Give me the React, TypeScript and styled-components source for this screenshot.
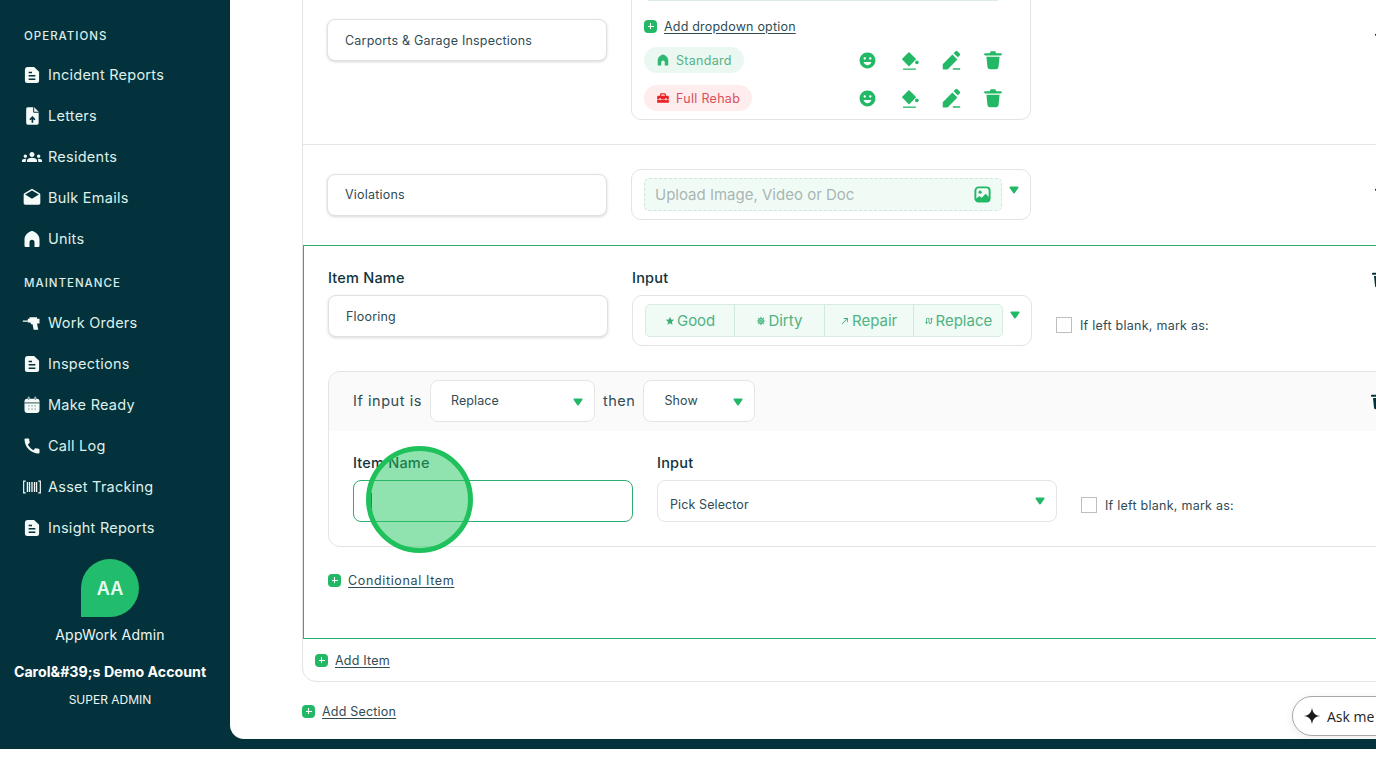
import React from "react";
import styled, { createGlobalStyle } from "styled-components";
import { MdDrafts, MdGroups, MdCall, MdEmojiEmotions, MdHomeRepairService, MdStar, MdCoronavirus, MdNorthEast, MdSwapCalls } from "react-icons/md";

const DARK = "#04323c";
const GREEN = "#22b866";
const FONT = `Inter, "Noto Sans", "Liberation Sans", sans-serif`;

const Global = createGlobalStyle`
  html, body { margin: 0; padding: 0; background: #fff; overflow: hidden; }
  * { box-sizing: border-box; }
  body { font-family: ${FONT}; }
`;

const Shell = styled.div`
  display: flex;
  width: 1376px;
  height: 749px;
  background: ${DARK};
  overflow: hidden;
`;
const Sidebar = styled.aside`
  width: 230px;
  flex: none;
  display: flex;
  flex-direction: column;
  padding-top: 29px;
`;
const GroupLabel = styled.div<{ $top?: number; $bottom: number }>`
  height: 14px;
  line-height: 14px;
  margin: ${(p) => p.$top ?? 0}px 0 ${(p) => p.$bottom}px 24px;
  font-size: 11.5px;
  font-weight: 500;
  letter-spacing: 1px;
  color: #dcecea;
`;
const NavItem = styled.div`
  height: 41px;
  display: flex;
  align-items: center;
  gap: 6px;
  padding-left: 22px;
  font-size: 14.5px;
  letter-spacing: 0.25px;
  color: #dff0ea;
  svg { width: 20px; height: 20px; flex: none; color: #f4fbf8; }
`;
const Profile = styled.div`
  display: flex;
  flex-direction: column;
  align-items: center;
  margin-top: 11px;
  padding-right: 10px;
  color: #eef7f4;
`;
const Avatar = styled.div`
  width: 58px;
  height: 58px;
  border-radius: 50% 50% 50% 0;
  background: #22bd6c;
  display: flex;
  align-items: center;
  justify-content: center;
  font-size: 18px;
  font-weight: 600;
  color: #e8fbf1;
`;
const ProfileName = styled.div`
  margin-top: 9px;
  height: 18px;
  line-height: 18px;
  font-size: 14px;
  letter-spacing: 0.2px;
`;
const AccountName = styled.div`
  margin-top: 19px;
  height: 18px;
  line-height: 18px;
  font-size: 14.2px;
  font-weight: 700;
  color: #fff;
`;
const Role = styled.div`
  margin-top: 11px;
  height: 16px;
  line-height: 16px;
  font-size: 12px;
`;

const Main = styled.main`
  position: relative;
  flex: 1;
  height: 739px;
  overflow: hidden;
  padding-left: 72px;
  background: #fff;
  border-bottom-left-radius: 14px;
  color: #2f4c54;
`;
const Section = styled.section`
  width: 1100px;
  margin-top: -65px;
  border: 1px solid #e2e4e4;
  border-radius: 0 0 14px 14px;
  padding-bottom: 12px;
`;
const Row = styled.div`
  display: flex;
  align-items: center;
  gap: 24px;
  padding: 24px 8px 24px 24px;
  border-bottom: 1px solid #e4e6e6;
`;
const PlainRow = styled(Row)`
  border-bottom-color: transparent;
`;
const NameBox = styled.div`
  width: 280px;
  height: 42px;
  flex: none;
  display: flex;
  align-items: center;
  padding-left: 17px;
  background: #fff;
  border: 1px solid #dfe2e2;
  border-radius: 8px;
  box-shadow: 0 1px 3px rgba(0, 0, 0, 0.16);
  font-size: 12.5px;
  letter-spacing: 0.2px;
`;
const Card = styled.div`
  width: 400px;
  flex: none;
  border: 1px solid #e2e4e4;
  border-radius: 10px;
  padding: 8px 28px 8px 12px;
  position: relative;
`;
const OptionsCard = styled(Card)`
  padding-top: 11px;
`;
const TopField = styled.div`
  height: 29px;
  border: 1px solid #d9ece3;
  border-radius: 6px;
  background: #f1fbf6;
`;
const AddLine = styled.div<{ $top?: number; $left?: number; $spacing?: number }>`
  display: flex;
  align-items: center;
  gap: 7px;
  height: 18px;
  margin-top: ${(p) => p.$top ?? 0}px;
  margin-left: ${(p) => p.$left ?? 0}px;
  font-size: 12.5px;
  letter-spacing: ${(p) => p.$spacing ?? 0.2}px;
  color: #2f4c54;
  span { text-decoration: underline; text-underline-offset: 2px; }
`;
const Plus = styled.i`
  position: relative;
  width: 13px;
  height: 13px;
  flex: none;
  border-radius: 4px;
  background: ${GREEN};
  &::before, &::after {
    content: "";
    position: absolute;
    background: #fff;
    left: 3.5px; top: 6px; width: 6px; height: 1px;
  }
  &::after { left: 6px; top: 3.5px; width: 1px; height: 6px; }
`;
const OptionRow = styled.div<{ $top: number }>`
  display: flex;
  align-items: center;
  justify-content: space-between;
  margin-top: ${(p) => p.$top}px;
`;
const Pill = styled.div<{ $red?: boolean }>`
  height: 26px;
  display: flex;
  align-items: center;
  gap: 6px;
  padding: 0 12px;
  border-radius: 13px;
  font-size: 12.5px;
  letter-spacing: 0.3px;
  background: ${(p) => (p.$red ? "#ffecec" : "#ebf8f1")};
  color: ${(p) => (p.$red ? "#d9505c" : "#52b383")};
  svg { width: 14px; height: 14px; color: ${(p) => (p.$red ? "#ea2127" : "#2eb872")}; }
`;
const Actions = styled.div`
  display: flex;
  gap: 20px;
  margin-right: -2px;
  color: ${GREEN};
  svg { width: 22px; height: 22px; display: block; }
  svg:first-child { width: 19px; height: 19px; margin: 1.5px; }
`;
const UploadField = styled.div`
  height: 33px;
  display: flex;
  align-items: center;
  justify-content: space-between;
  padding: 0 9px 0 10px;
  border: 1px dashed #cfe7da;
  border-radius: 5px;
  background: #f1fbf6;
  font-size: 15px;
  color: #a9b5b3;
  svg { width: 19px; height: 19px; color: ${GREEN}; }
`;
const CaretMark = styled.svg<{ $right: number; $top: number }>`
  position: absolute;
  right: ${(p) => p.$right}px;
  top: ${(p) => p.$top}px;
  width: 10px;
  height: 8px;
`;
const Trash = styled.div`
  width: 20px;
  height: 20px;
  flex: none;
  margin-left: auto;
  color: ${DARK};
  svg { width: 20px; height: 20px; display: block; }
`;
const HeaderTrash = styled(Trash)`
  margin-top: 11px;
`;
const Selected = styled.div`
  height: 394px;
  border: 1px solid #2fae72;
  padding: 23px 10px 0 24px;
`;
const ItemRow = styled.div`
  display: flex;
  align-items: flex-start;
  gap: 24px;
`;
const Column = styled.div`
  display: flex;
  flex-direction: column;
  gap: 8px;
  flex: none;
`;
const Label = styled.div`
  height: 18px;
  line-height: 18px;
  font-size: 14.5px;
  font-weight: 500;
  letter-spacing: 0.2px;
  color: #10343d;
`;
const SegmentGroup = styled.div`
  height: 33px;
  display: flex;
  border: 1px solid #d9ece3;
  border-radius: 5px;
  background: #f1fbf6;
`;
const Segment = styled.div`
  flex: 1;
  display: flex;
  align-items: center;
  justify-content: center;
  gap: 2px;
  font-size: 15px;
  color: #4fb282;
  & + & { border-left: 1px solid #d2e9dd; }
  svg { width: 10px; height: 10px; color: #3cae75; flex: none; }
`;
const Blank = styled.div<{ $top: number }>`
  display: flex;
  align-items: center;
  gap: 8px;
  height: 16px;
  margin-top: ${(p) => p.$top}px;
  font-size: 12.5px;
  letter-spacing: 0.25px;
`;
const Check = styled.div`
  width: 16px;
  height: 16px;
  border: 1px solid #bdbfbf;
`;
const Conditional = styled.div`
  margin-top: 25px;
  border: 1px solid #e2e4e4;
  border-radius: 12px;
  height: 176px;
`;
const CondHeader = styled.div`
  display: flex;
  align-items: flex-start;
  height: 59px;
  padding: 8px 0 0 24px;
  background: #fafafa;
  border-radius: 12px 12px 0 0;
  font-size: 14.5px;
  line-height: 42px;
  letter-spacing: 0.55px;
`;
const Select = styled.div<{ $w: number; $pad: number }>`
  position: relative;
  width: ${(p) => p.$w}px;
  height: 42px;
  flex: none;
  display: flex;
  align-items: center;
  margin: 0 8px;
  padding-left: ${(p) => p.$pad}px;
  background: #fff;
  border: 1px solid #e4e6e6;
  border-radius: 8px;
  font-size: 12.5px;
  letter-spacing: 0.1px;
`;
const FullSelect = styled(Select)`
  margin: 0;
  padding-top: 7px;
`;
const CondBody = styled.div`
  padding: 23px 0 0 24px;
`;
const InputWrap = styled.div`
  position: relative;
  width: 280px;
  height: 42px;
  border: 1px solid #2fae72;
  border-radius: 8px;
`;
const TextCursor = styled.div`
  position: absolute;
  left: 17px;
  top: 12px;
  width: 1px;
  height: 16px;
  background: #1c4a44;
`;
const ClickMark = styled.div`
  position: absolute;
  left: 12px;
  top: -35px;
  width: 107px;
  height: 107px;
  border: 5px solid #1fc15c;
  border-radius: 50%;
  background: rgba(34, 197, 94, 0.5);
`;
const AskButton = styled.div`
  position: absolute;
  left: 1062px;
  top: 696px;
  width: 130px;
  height: 40px;
  display: flex;
  align-items: center;
  gap: 6px;
  padding-left: 10px;
  background: #fff;
  border: 1px solid #a8a8a8;
  border-radius: 20px;
  box-shadow: 0 2px 10px rgba(0, 0, 0, 0.08);
  font-family: "Open Sans", sans-serif;
  font-size: 14px;
  white-space: nowrap;
  color: #222;
  svg { width: 18px; height: 18px; flex: none; }
`;

const Caret = ({ right, top }: { right: number; top: number }) => (
  <CaretMark $right={right} $top={top} viewBox="0 0 10 8">
    <path d="M1.5 1.5h7L5 6.5z" fill="#22b866" stroke="#22b866" strokeWidth="2" strokeLinejoin="round" />
  </CaretMark>
);

const DocIcon = () => (
  <svg viewBox="0 0 24 24">
    <path d="M7 2.5h7.5L20.5 8v10.5a3 3 0 0 1-3 3h-11a3 3 0 0 1-3-3V6a3.5 3.5 0 0 1 3.5-3.5z" fill="currentColor" />
    <path d="M8 9h4M8 13h8M8 17h8" stroke={DARK} strokeWidth="1.8" fill="none" />
  </svg>
);
const LetterIcon = () => (
  <svg viewBox="0 0 24 24">
    <path d="M7 1.5h7.5l5.5 5.5v13.5a2 2 0 0 1-2 2H7a2 2 0 0 1-2-2v-17a2 2 0 0 1 2-2z" fill="currentColor" />
    <path d="M14 1.5V7.5h6" fill="none" stroke={DARK} strokeWidth="1.2" />
    <path d="M12.5 20v-6M9.5 16.5l3-3 3 3" fill="none" stroke={DARK} strokeWidth="2" />
  </svg>
);
const ArchHome = () => (
  <svg viewBox="0 0 24 24" fill="currentColor">
    <path d="M12 2.5c4 .5 9 5 9 10V20a1.5 1.5 0 0 1-1.5 1.5H15V16a3 3 0 0 0-6 0v5.5H4.5A1.5 1.5 0 0 1 3 20v-7.5c0-5 5-9.5 9-10z" />
  </svg>
);
const CalendarIcon = () => (
  <svg viewBox="0 0 24 24">
    <path d="M6 4.5h12a3 3 0 0 1 3 3V18a3.5 3.5 0 0 1-3.5 3.5h-11A3.5 3.5 0 0 1 3 18V7.5a3 3 0 0 1 3-3z" fill="currentColor" />
    <path d="M8 2v4M16 2v4" stroke="currentColor" strokeWidth="2" />
    <path d="M8 2.5v3.5M16 2.5v3.500" stroke={DARK} strokeWidth=".6" />
    <path d="M3 9.500h18" stroke={DARK} strokeWidth="1" />
    <path d="M7.500 13h1.500M11.300 13h1.500M15 13h1.500M7.500 17h1.500M11.300 17h1.500M15 17h1.500" stroke="#7f979b" strokeWidth="1.6" />
  </svg>
);
const DrillIcon = () => (
  <svg viewBox="0 0 24 24" fill="currentColor">
    <path d="M1 9h6V7h2V5h9v2h3v5.500h-3l1.500 7.500h-5.500l-1.300-6.500H11l-1-2H7V10.500H1z" />
  </svg>
);
const BarcodeIcon = () => (
  <svg viewBox="0 0 24 24" fill="none" stroke="currentColor">
    <path d="M4.500 5H2v14h2.500M19.500 5H22v14h-2.500" strokeWidth="1.4" />
    <path d="M6.500 6v12M9 6v12M12 6v12M15 6v12M17.500 6v12" strokeWidth="1.6" />
  </svg>
);
const SparkIcon = () => (
  <svg viewBox="0 0 24 24" fill="#1a1a1a">
    <path d="M12 1c1 7 4 10 11 11-7 1-10 4-11 11-1-7-4-10-11-11 7-1 10-4 11-11z" />
  </svg>
);
const FillIcon = () => (
  <svg viewBox="0 0 24 24" fill="currentColor">
    <path d="M12 3.200l7.200 7.200a1 1 0 0 1 0 1.400L12 19l-7.200-7.200a1 1 0 0 1 0-1.400z" />
    <circle cx="20.600" cy="14.600" r="2" />
    <path d="M5.500 22h14" stroke="currentColor" strokeWidth="1.4" />
  </svg>
);
const PencilIcon = () => (
  <svg viewBox="0 0 24 24" fill="currentColor">
    <path d="M3 22v-5.500L13.500 6 19 11.500 8.500 22a1 1 0 0 1-.7.300H4a1 1 0 0 1-1-.300z" />
    <path d="M14.800 4.700l2.200-2.200a1.400 1.400 0 0 1 2 0l2.500 2.500a1.400 1.400 0 0 1 0 2l-1.200 1.300-.6.900z" />
    <path d="M14 21.800h8" stroke="currentColor" strokeWidth="1.6" />
  </svg>
);
const BinIcon = () => (
  <svg viewBox="0 0 24 24" fill="currentColor">
    <path d="M9.500 2.500h5l1 2h5a.9.9 0 0 1 0 2.500H3.500a.9.9 0 0 1 0-2.500h5z" />
    <path d="M4.800 8.500h14.400l-1.200 11.500a2.300 2.300 0 0 1-2.300 2H8.300a2.300 2.300 0 0 1-2.300-2z" />
  </svg>
);
const ImageIcon = () => (
  <svg viewBox="0 0 24 24">
    <rect x="3" y="3" width="18" height="18" rx="4" fill="none" stroke="currentColor" strokeWidth="2.400" />
    <circle cx="9" cy="9" r="2" fill="currentColor" />
    <path d="M3 18l5-4 3 2 5-5 5 5v2a3 3 0 0 1-3 3H6a3 3 0 0 1-3-3z" fill="currentColor" />
  </svg>
);

const operations: [React.ReactNode, string][] = [
  [<DocIcon />, "Incident Reports"],
  [<LetterIcon />, "Letters"],
  [<MdGroups />, "Residents"],
  [<MdDrafts />, "Bulk Emails"],
  [<ArchHome />, "Units"],
];
const maintenance: [React.ReactNode, string][] = [
  [<DrillIcon />, "Work Orders"],
  [<DocIcon />, "Inspections"],
  [<CalendarIcon />, "Make Ready"],
  [<MdCall />, "Call Log"],
  [<BarcodeIcon />, "Asset Tracking"],
  [<DocIcon />, "Insight Reports"],
];
const segments: [React.ReactNode, string][] = [
  [<MdStar />, "Good"],
  [<MdCoronavirus />, "Dirty"],
  [<MdNorthEast />, "Repair"],
  [<MdSwapCalls />, "Replace"],
];

const OptionActions = () => (
  <Actions>
    <MdEmojiEmotions />
    <FillIcon />
    <PencilIcon />
    <BinIcon />
  </Actions>
);

export default function App() {
  return (
    <>
      <Global />
      <Shell>
        <Sidebar>
          <GroupLabel $bottom={11}>OPERATIONS</GroupLabel>
          {operations.map(([icon, text]) => (
            <NavItem key={text}>{icon}{text}</NavItem>
          ))}
          <GroupLabel $top={17} $bottom={12}>MAINTENANCE</GroupLabel>
          {maintenance.map(([icon, text]) => (
            <NavItem key={text}>{icon}{text}</NavItem>
          ))}
          <Profile>
            <Avatar>AA</Avatar>
            <ProfileName>AppWork Admin</ProfileName>
            <AccountName>Carol&amp;#39;s Demo Account</AccountName>
            <Role>SUPER ADMIN</Role>
          </Profile>
        </Sidebar>
        <Main>
          <Section>
            <Row>
              <NameBox>Carports &amp; Garage Inspections</NameBox>
              <OptionsCard>
                <TopField />
                <AddLine $top={16}><Plus /><span>Add dropdown option</span></AddLine>
                <OptionRow $top={12}>
                  <Pill><ArchHome />Standard</Pill>
                  <OptionActions />
                </OptionRow>
                <OptionRow $top={12}>
                  <Pill $red><MdHomeRepairService />Full Rehab</Pill>
                  <OptionActions />
                </OptionRow>
              </OptionsCard>
              <Trash><BinIcon /></Trash>
            </Row>
            <PlainRow>
              <NameBox>Violations</NameBox>
              <Card>
                <UploadField>Upload Image, Video or Doc<ImageIcon /></UploadField>
                <Caret right={11} top={16} />
              </Card>
              <Trash><BinIcon /></Trash>
            </PlainRow>
            <Selected>
              <ItemRow>
                <Column>
                  <Label>Item Name</Label>
                  <NameBox>Flooring</NameBox>
                </Column>
                <Column>
                  <Label>Input</Label>
                  <Card>
                    <SegmentGroup>
                      {segments.map(([icon, text]) => (
                        <Segment key={text}>{icon}{text}</Segment>
                      ))}
                    </SegmentGroup>
                    <Caret right={11} top={15} />
                  </Card>
                </Column>
                <Blank $top={48}><Check />If left blank, mark as:</Blank>
                <Trash><BinIcon /></Trash>
              </ItemRow>
              <Conditional>
                <CondHeader>
                  If input is
                  <Select $w={165} $pad={20}>Replace<Caret right={11} top={17} /></Select>
                  then
                  <Select $w={112} $pad={20}>Show<Caret right={11} top={17} /></Select>
                  <HeaderTrash><BinIcon /></HeaderTrash>
                </CondHeader>
                <CondBody>
                  <ItemRow>
                    <Column>
                      <Label>Item Name</Label>
                      <InputWrap>
                        <TextCursor />
                        <ClickMark />
                      </InputWrap>
                    </Column>
                    <Column>
                      <Label>Input</Label>
                      <FullSelect $w={400} $pad={12}>Pick Selector<Caret right={11} top={16} /></FullSelect>
                    </Column>
                    <Blank $top={43}><Check />If left blank, mark as:</Blank>
                  </ItemRow>
                </CondBody>
              </Conditional>
              <AddLine $top={24} $spacing={0.65}><Plus /><span>Conditional Item</span></AddLine>
            </Selected>
            <AddLine $top={12} $left={12}><Plus /><span>Add Item</span></AddLine>
          </Section>
          <AddLine $top={20}><Plus /><span>Add Section</span></AddLine>
          <AskButton><SparkIcon />Ask me</AskButton>
        </Main>
      </Shell>
    </>
  );
}
